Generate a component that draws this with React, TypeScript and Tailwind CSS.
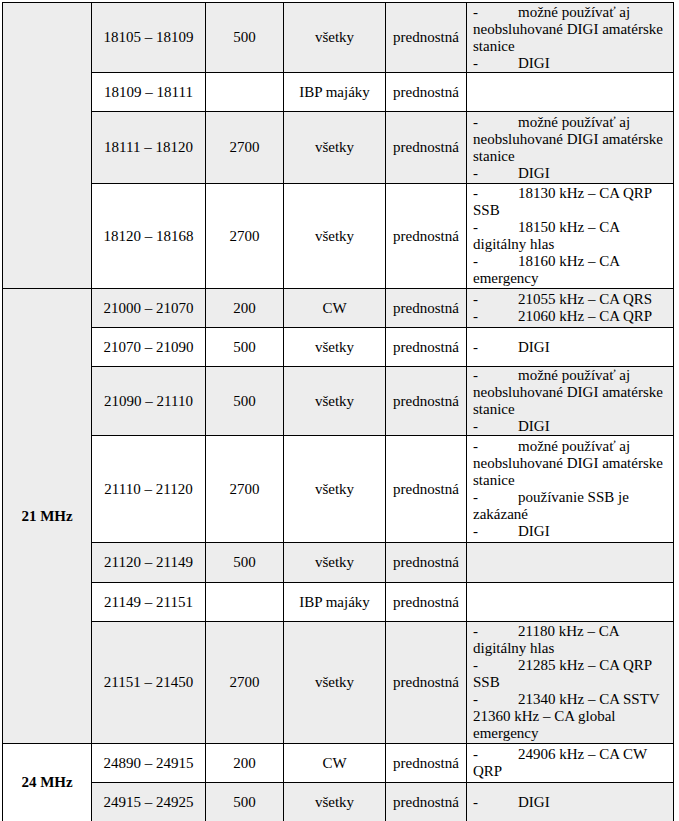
import React from "react";

type Line = { dash?: boolean; text: string };
type Row = {
  range: string;
  bw: string;
  mode: string;
  status: string;
  notes: Line[];
  gray: boolean;
};

const A: Line[] = [
  { dash: true, text: "možné používať aj" },
  { text: "neobsluhované DIGI amatérske" },
  { text: "stanice" },
  { dash: true, text: "DIGI" },
];

const rows: Row[] = [
  { range: "18105 – 18109", bw: "500", mode: "všetky", status: "prednostná", notes: A, gray: true },
  { range: "18109 – 18111", bw: "", mode: "IBP majáky", status: "prednostná", notes: [], gray: false },
  { range: "18111 – 18120", bw: "2700", mode: "všetky", status: "prednostná", notes: A, gray: true },
  {
    range: "18120 – 18168",
    bw: "2700",
    mode: "všetky",
    status: "prednostná",
    notes: [
      { dash: true, text: "18130 kHz – CA QRP" },
      { text: "SSB" },
      { dash: true, text: "18150 kHz – CA" },
      { text: "digitálny hlas" },
      { dash: true, text: "18160 kHz – CA" },
      { text: "emergency" },
    ],
    gray: false,
  },
  {
    range: "21000 – 21070",
    bw: "200",
    mode: "CW",
    status: "prednostná",
    notes: [
      { dash: true, text: "21055 kHz – CA QRS" },
      { dash: true, text: "21060 kHz – CA QRP" },
    ],
    gray: true,
  },
  { range: "21070 – 21090", bw: "500", mode: "všetky", status: "prednostná", notes: [{ dash: true, text: "DIGI" }], gray: false },
  { range: "21090 – 21110", bw: "500", mode: "všetky", status: "prednostná", notes: A, gray: true },
  {
    range: "21110 – 21120",
    bw: "2700",
    mode: "všetky",
    status: "prednostná",
    notes: [
      { dash: true, text: "možné používať aj" },
      { text: "neobsluhované DIGI amatérske" },
      { text: "stanice" },
      { dash: true, text: "používanie SSB je" },
      { text: "zakázané" },
      { dash: true, text: "DIGI" },
    ],
    gray: false,
  },
  { range: "21120 – 21149", bw: "500", mode: "všetky", status: "prednostná", notes: [], gray: true },
  { range: "21149 – 21151", bw: "", mode: "IBP majáky", status: "prednostná", notes: [], gray: false },
  {
    range: "21151 – 21450",
    bw: "2700",
    mode: "všetky",
    status: "prednostná",
    notes: [
      { dash: true, text: "21180 kHz – CA" },
      { text: "digitálny hlas" },
      { dash: true, text: "21285 kHz – CA QRP" },
      { text: "SSB" },
      { dash: true, text: "21340 kHz – CA SSTV" },
      { text: "21360 kHz – CA global" },
      { text: "emergency" },
    ],
    gray: true,
  },
  {
    range: "24890 – 24915",
    bw: "200",
    mode: "CW",
    status: "prednostná",
    notes: [{ dash: true, text: "24906 kHz – CA CW" }, { text: "QRP" }],
    gray: false,
  },
  { range: "24915 – 24925", bw: "500", mode: "všetky", status: "prednostná", notes: [{ dash: true, text: "DIGI" }], gray: true },
];

const groups: Record<number, { label: string; span: string; gray: boolean }> = {
  0: { label: "", span: "row-span-4", gray: true },
  4: { label: "21 MHz", span: "row-span-7", gray: true },
  11: { label: "24 MHz", span: "row-span-2", gray: false },
};

function cellBg(gray: boolean) {
  return gray ? "bg-[#ededed]" : "bg-white";
}

export default function App() {
  return (
    <div className="min-h-[821px] bg-white pl-[2px] pt-[2px] font-['Liberation_Serif','Times_New_Roman',serif]">
      <div className="grid w-[672px] gap-px bg-black p-px text-[15px] leading-[17px] text-black grid-cols-[88px_113px_77px_101px_80px_206px] grid-rows-[69px_38px_71px_104px_38px_38px_68px_106px_39px_38px_121px_38px_38px]">
        {rows.map((r, i) => {
          const g = groups[i];
          const bg = cellBg(r.gray);
          return (
            <React.Fragment key={i}>
              {g && (
                <div
                  className={`col-start-1 ${g.span} ${cellBg(g.gray)} flex items-center justify-center font-bold`}
                >
                  {g.label}
                </div>
              )}
              <div className={`col-start-2 ${bg} flex items-center justify-center whitespace-nowrap`}>
                {r.range}
              </div>
              <div className={`${bg} flex items-center justify-center`}>{r.bw}</div>
              <div className={`${bg} flex items-center justify-center whitespace-nowrap`}>{r.mode}</div>
              <div className={`${bg} flex items-center justify-center`}>{r.status}</div>
              <div className={`${bg} flex flex-col justify-center pl-[6px]`}>
                {r.notes.map((l, j) => (
                  <div key={j} className="flex whitespace-nowrap">
                    {l.dash && <span className="w-[45px] shrink-0">-</span>}
                    <span>{l.text}</span>
                  </div>
                ))}
              </div>
            </React.Fragment>
          );
        })}
      </div>
    </div>
  );
}
